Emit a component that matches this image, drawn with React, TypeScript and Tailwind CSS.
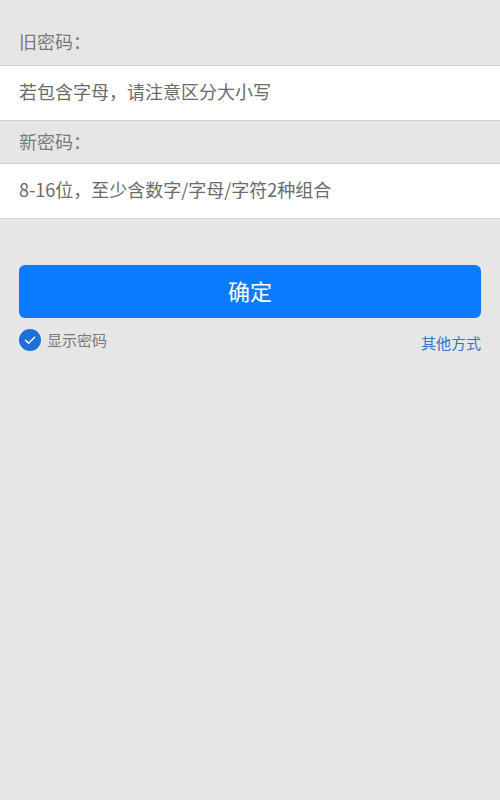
export default function App() {
  const font = { fontFamily: '"Noto Sans CJK SC", "Noto Sans", sans-serif' };
  return (
    <div className="w-[500px] h-[800px] bg-[#e6e6e6] flex flex-col" style={font}>
      <div className="h-[65px] px-[19px] pt-[28px] text-[18px] leading-[26px] text-[#7a7a7a]">旧密码：</div>
      <div className="h-[56px] bg-white border-y border-[#d0d0d0] px-[19px] pb-[3px] flex items-center text-[18px] text-[#6a6a6a]">
        若包含字母，请注意区分大小写
      </div>
      <div className="h-[42px] px-[19px] pb-[2px] flex items-center text-[18px] text-[#7a7a7a]">新密码：</div>
      <div className="h-[56px] bg-white border-y border-[#d0d0d0] px-[19px] pb-[3px] flex items-center text-[18px] text-[#6a6a6a]">
        8-16位，至少含数字/字母/字符2种组合
      </div>
      <div className="px-[19px] pt-[46px]">
        <button className="w-full h-[53px] rounded-[6px] bg-[#0a7bff] text-white text-[22px] pb-[2px] flex items-center justify-center">
          确定
        </button>
        <div className="flex items-start justify-between mt-[11px]">
          <div className="flex items-center gap-[6px]">
            <svg width="22" height="22" viewBox="0 0 22 22">
              <circle cx="11" cy="11" r="11" fill="#1f6fd8" />
              <path d="M6.5 11.2 L9.6 14.2 L15.6 8.2" fill="none" stroke="white" strokeWidth="1.4" strokeLinecap="round" strokeLinejoin="round" />
            </svg>
            <span className="text-[15px] text-[#7a7a7a] leading-[22px]">显示密码</span>
          </div>
          <span className="text-[15px] text-[#2a78d0] leading-[22px] mt-[3px]">其他方式</span>
        </div>
      </div>
    </div>
  );
}
